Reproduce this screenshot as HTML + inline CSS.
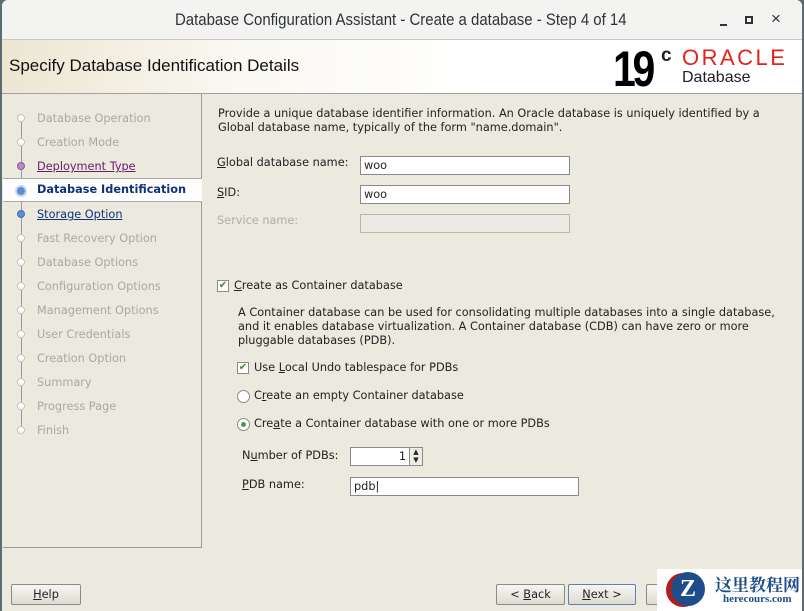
<!DOCTYPE html>
<html><head><style>
*{margin:0;padding:0;box-sizing:border-box}
body{width:804px;height:611px;overflow:hidden;background:#5d6b73;font-family:"DejaVu Sans",sans-serif;font-size:11.3px;color:#222;position:relative}
.win{position:absolute;left:2px;top:0;width:800px;height:611px;background:#ece9de;border-radius:6px 6px 0 0;overflow:hidden}
.tb{position:absolute;left:0;top:0;width:800px;height:40px;background:#f3f3f2;border-bottom:1px solid #c8c8c8;font-family:"Liberation Sans",sans-serif;color:#2e3436}
.tb .tt{position:absolute;left:173px;top:10px;font-size:17px;white-space:nowrap;transform:scaleX(0.88);transform-origin:left}
.hd{position:absolute;left:0;top:40px;width:800px;height:54px;background:linear-gradient(90deg,#ece6d2 0%,#faf8f2 30%,#fff 60%);border-bottom:1px solid #a0a0a0}
.hd .t{position:absolute;left:7px;top:16px;font-family:"Liberation Sans",sans-serif;font-size:17px;color:#111;white-space:nowrap;transform:scaleX(1.0);transform-origin:left}
.lp{position:absolute;left:1px;top:94px;width:199px;height:454px;border-right:1px solid #9a9a9a;border-bottom:1px solid #9a9a9a}
.it{position:absolute;left:34px;color:#a9a9a2;white-space:nowrap}
.dot{position:absolute;left:14px;width:8px;height:8px;border-radius:50%;background:#fff;border:1px solid #c4c4c4}
.line{position:absolute;left:18px;width:1px;background:#999}
.a{position:absolute;white-space:nowrap}
.inp{position:absolute;background:#fff;border:1px solid #8a8a8a;height:19px;padding-left:3px;line-height:17px}
.cb{position:absolute;width:12px;height:12px;border:1px solid #8a8a8a;background:#fff;color:#3a8a2a;font-size:10px;line-height:10px;text-align:center}
.rb{position:absolute;width:13px;height:13px;border:1px solid #8a8a8a;border-radius:50%;background:#fff}
.btn{position:absolute;height:21px;border:1px solid #8a8a8a;border-radius:2px;background:linear-gradient(#f7f6f2,#dedbd0);text-align:center;line-height:19px}
u{text-decoration:underline}
</style></head><body>
<div class="win">
<div class="tb"><div class="tt">Database Configuration Assistant - Create a database - Step 4 of 14</div>
<div style="position:absolute;left:718px;top:24px;width:7px;height:2px;background:#2e3436"></div>
<div style="position:absolute;left:743px;top:16px;width:8px;height:8px;border:2px solid #2e3436"></div>
<span style="position:absolute;left:769px;top:9px;font-size:17px">×</span></div>
<div class="hd"><div class="t">Specify Database Identification Details</div>
<div style="position:absolute;left:611px;top:0px;font-family:'Liberation Sans',sans-serif;font-weight:bold;font-size:50px;letter-spacing:-4px;transform:scaleX(0.82);transform-origin:left;color:#000">19</div>
<div style="position:absolute;left:659px;top:5px;font-family:'Liberation Sans';font-weight:bold;font-size:19px">c</div>
<div style="position:absolute;left:680px;top:5px;font-family:'Liberation Sans';font-size:22px;color:#e5231b;letter-spacing:2.5px">ORACLE</div>
<div style="position:absolute;left:680px;top:29px;font-family:'Liberation Sans';font-size:16px">Database</div></div>
<div class="lp">
<div class="line" style="top:24px;height:310px"></div>
<div class="dot" style="top:20px"></div><div class="it" style="top:18px">Database Operation</div>
<div class="dot" style="top:44px"></div><div class="it" style="top:42px">Creation Mode</div>
<div class="dot" style="top:68px;background:#b58ac0;border-color:#8a5a96"></div><div class="it" style="top:66px;color:#6a1a6a"><u>Deployment Type</u></div>
<div style="position:absolute;left:0;top:84px;width:199px;height:24px;background:#fff;border-top:1px solid #a9a9a9;border-bottom:1px solid #a9a9a9"></div>
<div class="dot" style="top:91px;left:12px;width:12px;height:12px;background:#5d8ed8;border:2px solid #c8d8f0"></div><div class="it" style="top:89px;color:#10307a;font-weight:bold">Database Identification</div>
<div class="dot" style="top:116px;background:#5d8ed8;border-color:#4070b0"></div><div class="it" style="top:114px;color:#10307a"><u>Storage Option</u></div>
<div class="dot" style="top:140px"></div><div class="it" style="top:138px">Fast Recovery Option</div>
<div class="dot" style="top:164px"></div><div class="it" style="top:162px">Database Options</div>
<div class="dot" style="top:188px"></div><div class="it" style="top:186px">Configuration Options</div>
<div class="dot" style="top:212px"></div><div class="it" style="top:210px">Management Options</div>
<div class="dot" style="top:236px"></div><div class="it" style="top:234px">User Credentials</div>
<div class="dot" style="top:260px"></div><div class="it" style="top:258px">Creation Option</div>
<div class="dot" style="top:284px"></div><div class="it" style="top:282px">Summary</div>
<div class="dot" style="top:308px"></div><div class="it" style="top:306px">Progress Page</div>
<div class="dot" style="top:332px"></div><div class="it" style="top:330px">Finish</div>
</div>
<div class="a" style="left:216px;top:107px;line-height:14px">Provide a unique database identifier information. An Oracle database is uniquely identified by a<br>Global database name, typically of the form "name.domain".</div>
<div class="a" style="left:215px;top:156px"><u>G</u>lobal database name:</div>
<div class="inp" style="left:358px;top:156px;width:210px">woo</div>
<div class="a" style="left:215px;top:186px"><u>S</u>ID:</div>
<div class="inp" style="left:358px;top:185px;width:210px">woo</div>
<div class="a" style="left:215px;top:214px;color:#b0aea6">Service name:</div>
<div class="inp" style="left:358px;top:214px;width:210px;background:#eceae4;border-color:#b8b6ae"></div>
<div class="cb" style="left:215px;top:280px">✔</div>
<div class="a" style="left:232px;top:279px"><u>C</u>reate as Container database</div>
<div class="a" style="left:236px;top:306px;line-height:14px">A Container database can be used for consolidating multiple databases into a single database,<br>and it enables database virtualization. A Container database (CDB) can have zero or more<br>pluggable databases (PDB).</div>
<div class="cb" style="left:235px;top:362px">✔</div>
<div class="a" style="left:252px;top:361px">Use <u>L</u>ocal Undo tablespace for PDBs</div>
<div class="rb" style="left:235px;top:390px"></div>
<div class="a" style="left:252px;top:389px">C<u>r</u>eate an empty Container database</div>
<div class="rb" style="left:235px;top:418px"><div style="position:absolute;left:3px;top:3px;width:5px;height:5px;border-radius:50%;background:#4a9a4a"></div></div>
<div class="a" style="left:252px;top:417px">Cre<u>a</u>te a Container database with one or more PDBs</div>
<div class="a" style="left:240px;top:449px">N<u>u</u>mber of PDBs:</div>
<div class="inp" style="left:348px;top:447px;width:60px;text-align:right;padding-right:3px">1</div>
<div style="position:absolute;left:407px;top:447px;width:14px;height:19px;border:1px solid #8a8a8a;background:#eeece6;font-size:7px;line-height:8px;text-align:center">▲<br>▼</div>
<div class="a" style="left:240px;top:478px"><u>P</u>DB name:</div>
<div class="inp" style="left:348px;top:477px;width:229px">pdb|</div>
<div class="btn" style="left:9px;top:584px;width:70px"><u>H</u>elp</div>
<div class="btn" style="left:494px;top:584px;width:69px">&lt; <u>B</u>ack</div>
<div class="btn" style="left:566px;top:584px;width:68px;border-color:#6080b0"><u>N</u>ext &gt;</div>
<div class="btn" style="left:644px;top:584px;width:30px"></div>
<div style="position:absolute;left:655px;top:569px;width:145px;height:42px;background:#fff">
<div style="position:absolute;left:14px;top:3px;width:34px;height:34px;border-radius:50%;background:#1f4d8a;color:#fff;font:bold 24px 'Liberation Serif';text-align:center;line-height:34px;box-shadow:-5px 1px 0 #b51d1d">Z</div>
<div style="position:absolute;left:58px;top:2px;font:bold 17px 'Noto Serif CJK SC',serif;color:#1f4d8a">这里教程网</div>
<div style="position:absolute;left:66px;top:24px;font:bold 11px 'Liberation Serif',serif;color:#1f4d8a">herecours.com</div>
</div>
</div>
</body></html>
